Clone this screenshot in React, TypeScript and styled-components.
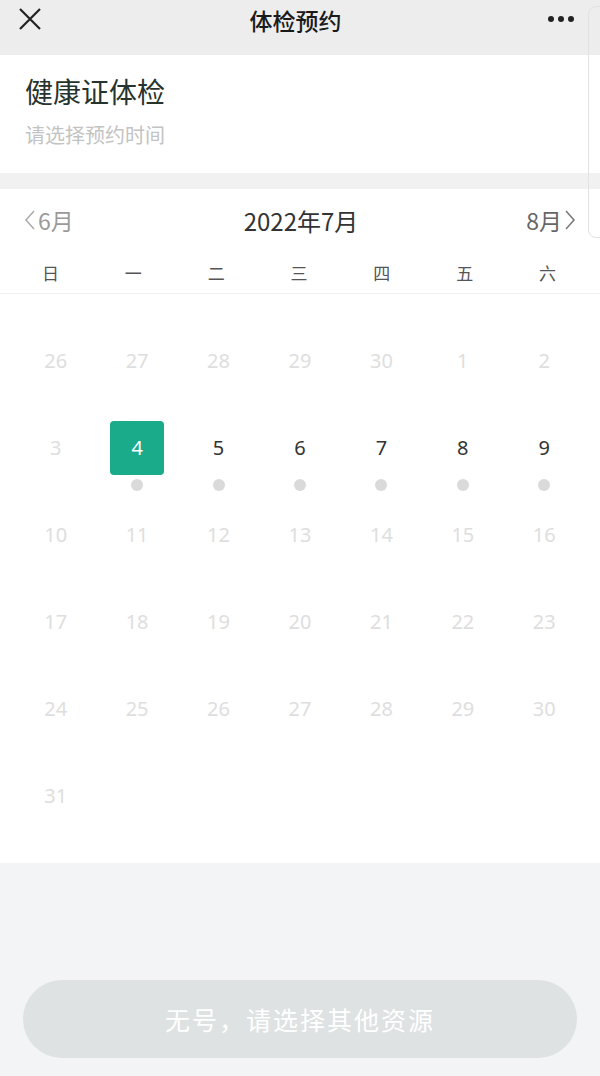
import React from 'react';
import styled, { createGlobalStyle } from 'styled-components';

const GlobalStyle = createGlobalStyle`
   html, body {
      margin: 0;
      padding: 0;
      background: #f3f4f5;
      font-family: "Noto Sans CJK SC", "Noto Sans", sans-serif;
   }
`;

const Page = styled.div`
   position: relative;
   width: 600px;
   min-height: 1076px;
   background: #f3f4f5;
   overflow: hidden;
`;

const NavBar = styled.div`
   height: 55px;
   display: flex;
   align-items: center;
   justify-content: space-between;
   padding: 0 25px 0 16px;
   background: #ededed;
`;

const NavTitle = styled.div`
   font-size: 23px;
   font-weight: 500;
   color: #1a1a1a;
   margin-top: -16px;
`;

const NavIcon = styled.div`
   width: 28px;
   height: 28px;
   display: flex;
   align-items: center;
   justify-content: center;
   margin-top: -18px;
`;

const SideEdge = styled.div`
   position: absolute;
   top: 6px;
   right: -12px;
   width: 22px;
   height: 230px;
   border: 1px solid #e2e2e2;
   border-radius: 8px;
   background: transparent;
`;

const InfoCard = styled.div`
   height: 118px;
   background: #ffffff;
   padding: 16px 25px 0;
   box-sizing: border-box;
`;

const InfoTitle = styled.div`
   font-size: 28px;
   color: #26332e;
   line-height: 40px;
`;

const InfoSub = styled.div`
   font-size: 20px;
   color: #c3c3c3;
   line-height: 28px;
   margin-top: 10px;
`;

const Gap = styled.div`
   height: 16px;
   background: #f1f1f1;
`;

const Calendar = styled.div`
   background: #ffffff;
   padding: 0 15px 24px;
`;

const MonthBar = styled.div`
   height: 62px;
   display: flex;
   align-items: center;
   justify-content: space-between;
   padding: 0 10px 0 10px;
`;

const MonthLink = styled.div<{ $tone: string }>`
   display: flex;
   align-items: center;
   gap: 3px;
   font-size: 23px;
   color: ${(p) => p.$tone};
`;

const MonthTitle = styled.div`
   font-size: 24px;
   color: #333333;
   margin-left: 2px;
`;

const WeekRow = styled.div`
   display: grid;
   grid-template-columns: repeat(7, 1fr);
   height: 42px;
   align-items: center;
   margin: 0 -15px;
   padding: 0 11px 0 9px;
   border-bottom: 1px solid #eeeeee;
`;

const WeekCell = styled.div`
   text-align: center;
   font-size: 17px;
   color: #555555;
`;

const DayGrid = styled.div`
   display: grid;
   grid-template-columns: repeat(7, 1fr);
   grid-auto-rows: 87px;
   padding-top: 23px;
`;

const DayCell = styled.div`
   position: relative;
   display: flex;
   justify-content: center;
   align-items: center;
`;

const DayBox = styled.div<{ $active?: boolean; $open?: boolean }>`
   width: 54px;
   height: 54px;
   border-radius: 4px;
   display: flex;
   align-items: center;
   justify-content: center;
   font-size: 20px;
   font-family: "Noto Sans", sans-serif;
   background: ${(p) => (p.$active ? '#1aab8a' : 'transparent')};
   color: ${(p) => (p.$active ? '#ffffff' : p.$open ? '#333333' : '#dedede')};
`;

const Dot = styled.span`
   position: absolute;
   left: 50%;
   top: 75px;
   width: 12px;
   height: 12px;
   margin-left: -6px;
   border-radius: 50%;
   background: #dadada;
`;

const Footer = styled.div`
   padding: 117px 23px 0;
`;

const MainButton = styled.button`
   width: 100%;
   height: 78px;
   border: none;
   border-radius: 39px;
   background: #dee2e3;
   color: #ffffff;
   font-size: 25px;
   font-family: "Noto Sans CJK SC", sans-serif;
   letter-spacing: 2px;
`;

const weekdays = ['日', '一', '二', '三', '四', '五', '六'];

const days: { n: number; open?: boolean; active?: boolean }[] = [
   { n: 26 }, { n: 27 }, { n: 28 }, { n: 29 }, { n: 30 }, { n: 1 }, { n: 2 },
   { n: 3 }, { n: 4, open: true, active: true }, { n: 5, open: true }, { n: 6, open: true },
   { n: 7, open: true }, { n: 8, open: true }, { n: 9, open: true },
   { n: 10 }, { n: 11 }, { n: 12 }, { n: 13 }, { n: 14 }, { n: 15 }, { n: 16 },
   { n: 17 }, { n: 18 }, { n: 19 }, { n: 20 }, { n: 21 }, { n: 22 }, { n: 23 },
   { n: 24 }, { n: 25 }, { n: 26 }, { n: 27 }, { n: 28 }, { n: 29 }, { n: 30 },
   { n: 31 },
];

function App() {
   return (
      <Page>
         <GlobalStyle />
         <NavBar>
            <NavIcon>
               <svg width="22" height="22" viewBox="0 0 22 22">
                  <path d="M1 1 L21 21 M21 1 L1 21" stroke="#222" strokeWidth="2.2" fill="none" />
               </svg>
            </NavIcon>
            <NavTitle>体检预约</NavTitle>
            <NavIcon>
               <svg width="28" height="8" viewBox="0 0 28 8">
                  <circle cx="4" cy="4" r="3" fill="#222" />
                  <circle cx="14" cy="4" r="3" fill="#222" />
                  <circle cx="24" cy="4" r="3" fill="#222" />
               </svg>
            </NavIcon>
         </NavBar>
         <InfoCard>
            <InfoTitle>健康证体检</InfoTitle>
            <InfoSub>请选择预约时间</InfoSub>
         </InfoCard>
         <Gap />
         <Calendar>
            <MonthBar>
               <MonthLink $tone="#9a9a9a">
                  <svg width="10" height="22" viewBox="0 0 10 22">
                     <path d="M9 2 L1 11 L9 20" stroke="#aaa" strokeWidth="1.5" fill="none" />
                  </svg>
                  6月
               </MonthLink>
               <MonthTitle>2022年7月</MonthTitle>
               <MonthLink $tone="#666666">
                  8月
                  <svg width="10" height="22" viewBox="0 0 10 22">
                     <path d="M1 2 L9 11 L1 20" stroke="#777" strokeWidth="1.5" fill="none" />
                  </svg>
               </MonthLink>
            </MonthBar>
            <WeekRow>
               {weekdays.map((w) => (
                  <WeekCell key={w}>{w}</WeekCell>
               ))}
            </WeekRow>
            <DayGrid>
               {days.map((d, i) => (
                  <DayCell key={i}>
                     <DayBox $active={d.active} $open={d.open}>
                        {d.n}
                     </DayBox>
                     {d.open && <Dot />}
                  </DayCell>
               ))}
            </DayGrid>
         </Calendar>
         <Footer>
            <MainButton>无号，请选择其他资源</MainButton>
         </Footer>
         <SideEdge />
      </Page>
   );
}

export default App;
